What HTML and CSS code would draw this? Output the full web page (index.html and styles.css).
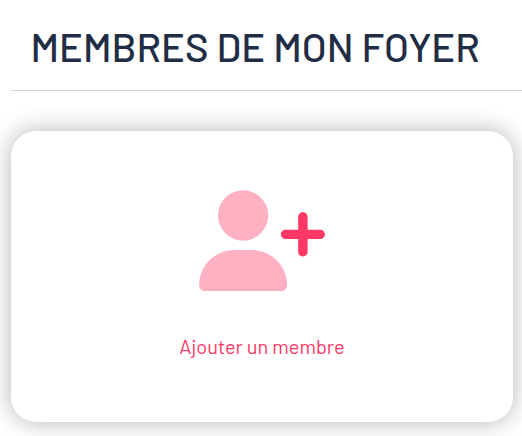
FILE: index.html
```html
<!DOCTYPE html>
<html lang="fr">
<head>
<meta charset="utf-8">
<title>Membres de mon foyer</title>
<link rel="stylesheet" href="styles.css">
</head>
<body>
<main class="household">
  <h1 class="title">MEMBRES DE MON FOYER</h1>
  <a class="card" href="#">
    <svg class="icon" viewBox="0 0 640 512" aria-hidden="true">
      <path class="person" d="M96 128a128 128 0 1 1 256 0A128 128 0 1 1 96 128zM0 482.300C0 383.800 79.800 304 178.300 304h91.400C368.200 304 448 383.800 448 482.300c0 16.400-13.300 29.700-29.700 29.700H29.700C13.300 512 0 498.700 0 482.300z"/>
      <path class="plus" d="M504 312V248H440c-13.300 0-24-10.700-24-24s10.700-24 24-24h64V136c0-13.300 10.700-24 24-24s24 10.700 24 24v64h64c13.300 0 24 10.700 24 24s-10.700 24-24 24H552v64c0 13.300-10.700 24-24 24s-24-10.700-24-24z"/>
    </svg>
    <span class="label">Ajouter un membre</span>
  </a>
</main>
</body>
</html>
```
FILE: styles.css
```css
* { box-sizing: border-box; }
body { margin: 0; background: #fff; font-family: Barlow, Roboto, "Liberation Sans", sans-serif; }
.household { height: 436px; padding-left: 11px; overflow: hidden; }
.title { height: 91px; margin: 0 0 40px; padding: 16px 0 0 19.5px; border-bottom: 1px solid #d2d2d2; color: #212d45; font-size: 40px; font-weight: 500; line-height: 60px; white-space: nowrap; }
.card { display: flex; flex-direction: column; align-items: center; width: 502px; height: 291px; padding-top: 59px; border-radius: 25px; background: #fff; box-shadow: 0 0 25px rgba(0, 0, 0, .3); text-decoration: none; }
.icon { width: 126px; height: 101px; padding-top: .3px; }
.person { fill: #ffb1c4; }
.plus { fill: #ff3866; }
.label { margin-top: 40px; color: #ff3866; font-size: 20px; line-height: 30px; white-space: nowrap; }
```
